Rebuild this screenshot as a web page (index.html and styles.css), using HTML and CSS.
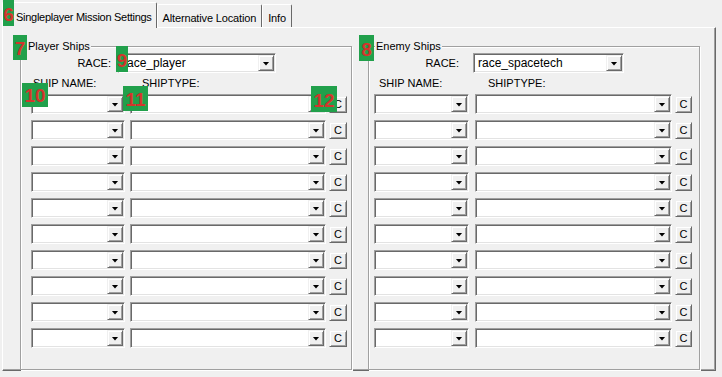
FILE: index.html
```html
<!DOCTYPE html>
<html lang="en">
<head>
    <meta charset="UTF-8">
    <title>Mission Settings</title>
    <link rel="stylesheet" href="styles.css">
</head>
<body>
    <div class="tabs">
        <div class="tab active">Singleplayer Mission Settings</div>
        <div class="tab">Alternative Location</div>
        <div class="tab">Info</div>
    </div>

    <div class="panel">
        <fieldset class="group player">
            <legend>Player Ships</legend>
            <div class="race-row">
                <span class="race-label">RACE:</span>
                <div class="combo race"><span class="combo-text">race_player</span><span class="drop"></span></div>
            </div>
            <div class="head-row">
                <span class="head-name">SHIP NAME:</span>
                <span>SHIPTYPE:</span>
            </div>
            <div class="rows">
                <div class="row"><div class="combo name"><span class="drop"></span></div><div class="combo type"><span class="drop"></span></div><div class="clear">C</div></div>
                <div class="row"><div class="combo name"><span class="drop"></span></div><div class="combo type"><span class="drop"></span></div><div class="clear">C</div></div>
                <div class="row"><div class="combo name"><span class="drop"></span></div><div class="combo type"><span class="drop"></span></div><div class="clear">C</div></div>
                <div class="row"><div class="combo name"><span class="drop"></span></div><div class="combo type"><span class="drop"></span></div><div class="clear">C</div></div>
                <div class="row"><div class="combo name"><span class="drop"></span></div><div class="combo type"><span class="drop"></span></div><div class="clear">C</div></div>
                <div class="row"><div class="combo name"><span class="drop"></span></div><div class="combo type"><span class="drop"></span></div><div class="clear">C</div></div>
                <div class="row"><div class="combo name"><span class="drop"></span></div><div class="combo type"><span class="drop"></span></div><div class="clear">C</div></div>
                <div class="row"><div class="combo name"><span class="drop"></span></div><div class="combo type"><span class="drop"></span></div><div class="clear">C</div></div>
                <div class="row"><div class="combo name"><span class="drop"></span></div><div class="combo type"><span class="drop"></span></div><div class="clear">C</div></div>
                <div class="row"><div class="combo name"><span class="drop"></span></div><div class="combo type"><span class="drop"></span></div><div class="clear">C</div></div>
            </div>
        </fieldset>

        <fieldset class="group enemy">
            <legend>Enemy Ships</legend>
            <div class="race-row">
                <span class="race-label">RACE:</span>
                <div class="combo race"><span class="combo-text">race_spacetech</span><span class="drop"></span></div>
            </div>
            <div class="head-row">
                <span class="head-name">SHIP NAME:</span>
                <span>SHIPTYPE:</span>
            </div>
            <div class="rows">
                <div class="row"><div class="combo name"><span class="drop"></span></div><div class="combo type"><span class="drop"></span></div><div class="clear">C</div></div>
                <div class="row"><div class="combo name"><span class="drop"></span></div><div class="combo type"><span class="drop"></span></div><div class="clear">C</div></div>
                <div class="row"><div class="combo name"><span class="drop"></span></div><div class="combo type"><span class="drop"></span></div><div class="clear">C</div></div>
                <div class="row"><div class="combo name"><span class="drop"></span></div><div class="combo type"><span class="drop"></span></div><div class="clear">C</div></div>
                <div class="row"><div class="combo name"><span class="drop"></span></div><div class="combo type"><span class="drop"></span></div><div class="clear">C</div></div>
                <div class="row"><div class="combo name"><span class="drop"></span></div><div class="combo type"><span class="drop"></span></div><div class="clear">C</div></div>
                <div class="row"><div class="combo name"><span class="drop"></span></div><div class="combo type"><span class="drop"></span></div><div class="clear">C</div></div>
                <div class="row"><div class="combo name"><span class="drop"></span></div><div class="combo type"><span class="drop"></span></div><div class="clear">C</div></div>
                <div class="row"><div class="combo name"><span class="drop"></span></div><div class="combo type"><span class="drop"></span></div><div class="clear">C</div></div>
                <div class="row"><div class="combo name"><span class="drop"></span></div><div class="combo type"><span class="drop"></span></div><div class="clear">C</div></div>
            </div>
        </fieldset>
    </div>

    <!-- numbered markers -->
    <div class="tag tag-6">6</div>
    <div class="tag tag-7">7</div>
    <div class="tag tag-8">8</div>
    <div class="tag tag-9">9</div>
    <div class="tag tag-10">10</div>
    <div class="tag tag-11">11</div>
    <div class="tag tag-12">12</div>
</body>
</html>
```

FILE: styles.css
```css
* {
    box-sizing: border-box;
    margin: 0;
    padding: 0;
}

body {
    background-color: #f0f0f0;
    font-family: "Liberation Sans", Arial, sans-serif;
    font-size: 11px;
    color: #000;
    width: 722px;
    height: 377px;
    overflow: hidden;
    position: relative;
}

/* tabs */
.tabs {
    display: flex;
    align-items: flex-end;
    height: 27px;
    padding-left: 2px;
    position: relative;
    z-index: 1;
}

.tab {
    height: 23px;
    padding: 6px 5px 0 5px;
    border: 1px solid;
    border-bottom: none;
    border-color: #fff #696969 #fff #fff;
    border-radius: 2px 2px 0 0;
    line-height: 14px;
    letter-spacing: -0.15px;
    white-space: nowrap;
}

.tab.active {
    height: 26px;
    margin-bottom: -1px;
    padding: 7px 4px 0 13px;
    letter-spacing: -0.28px;
    background-color: #f0f0f0;
}

.panel {
    display: flex;
    gap: 16px;
    width: 714px;
    height: 344px;
    margin-left: 2px;
    padding: 12px 0 0 17px;
    border: 1px solid;
    border-color: #fff #696969 #696969 #fff;
    box-shadow: inset -1px -1px 0 #a0a0a0;
}

/* group boxes */
.group {
    width: 332px;
    min-width: 0;
    padding: 0 0 7px 0;
    border: 1px solid #a0a0a0;
    box-shadow: 1px 1px 0 #fff, inset 1px 1px 0 #fff;
}

.group legend {
    margin-left: 6px;
    padding: 0 1px;
    line-height: 13px;
    background-color: #f0f0f0;
}

.race-row {
    display: flex;
    align-items: center;
    height: 20px;
}

.race-label {
    width: 90px;
    text-align: right;
}

.player .race-label {
    margin-right: 7px;
}

.enemy .race-label {
    margin-right: 14px;
}

.player .race {
    width: 158px;
}

.enemy .race {
    width: 151px;
}

.head-row {
    display: flex;
    margin-top: 4px;
    line-height: 13px;
}

.player .head-name {
    width: 121px;
    padding-left: 12px;
}

.enemy .head-name {
    width: 119px;
    padding-left: 10px;
}

.rows {
    display: flex;
    flex-direction: column;
    gap: 6px;
    margin-top: 4px;
}

.row {
    display: flex;
    align-items: center;
}

.player .row { padding-left: 10px; }
.player .name { width: 94px; }
.player .type { width: 196px; margin-left: 5px; }
.player .clear { width: 18px; margin-left: 3px; }

.enemy .row { padding-left: 5px; }
.enemy .name { width: 95px; }
.enemy .type { width: 197px; margin-left: 6px; }
.enemy .clear { width: 17px; margin-left: 3px; }

/* classic combo box */
.combo {
    display: flex;
    align-items: center;
    height: 20px;
    padding: 1px;
    background-color: #fff;
    border: 1px solid;
    border-color: #a0a0a0 #fff #fff #a0a0a0;
    box-shadow: inset 1px 1px 0 #696969, inset -1px -1px 0 #e3e3e3;
}

.combo-text {
    flex: 1;
    padding-left: 3px;
    font-size: 12px;
    line-height: 16px;
    white-space: nowrap;
    overflow: hidden;
}

.drop {
    display: flex;
    align-items: center;
    justify-content: center;
    width: 16px;
    height: 16px;
    margin-left: auto;
    padding-top: 1px;
    background-color: #f0f0f0;
    border: 1px solid;
    border-color: #f0f0f0 #696969 #696969 #f0f0f0;
    box-shadow: inset 1px 1px 0 #fff, inset -1px -1px 0 #a0a0a0;
}

.drop::after {
    content: "";
    width: 7px;
    height: 4px;
    background-color: #000;
    clip-path: polygon(0 0, 100% 0, 50% 100%);
}

.clear {
    height: 17px;
    line-height: 15px;
    text-align: center;
    background-color: #f0f0f0;
    border: 1px solid;
    border-color: #f0f0f0 #696969 #696969 #f0f0f0;
    box-shadow: inset 1px 1px 0 #fff, inset -1px -1px 0 #a0a0a0;
}

/* green annotation markers */
.tag {
    position: absolute;
    z-index: 2;
    display: flex;
    align-items: flex-end;
    justify-content: center;
    padding-bottom: 2px;
    background-color: #21a04b;
    color: #d3352c;
    font-size: 19px;
    font-weight: bold;
    line-height: 19px;
}

.tag-6 { left: 3px; top: 0; width: 11px; height: 26px; }
.tag-7 { left: 13px; top: 35px; width: 14px; height: 25px; }
.tag-8 { left: 359px; top: 35px; width: 15px; height: 26px; }
.tag-9 { left: 116px; top: 46px; width: 12px; height: 26px; }
.tag-10 { left: 22px; top: 83px; width: 26px; height: 24px; }
.tag-11 { left: 123px; top: 86px; width: 25px; height: 25px; }
.tag-12 { left: 311px; top: 86px; width: 26px; height: 26px; }
```
